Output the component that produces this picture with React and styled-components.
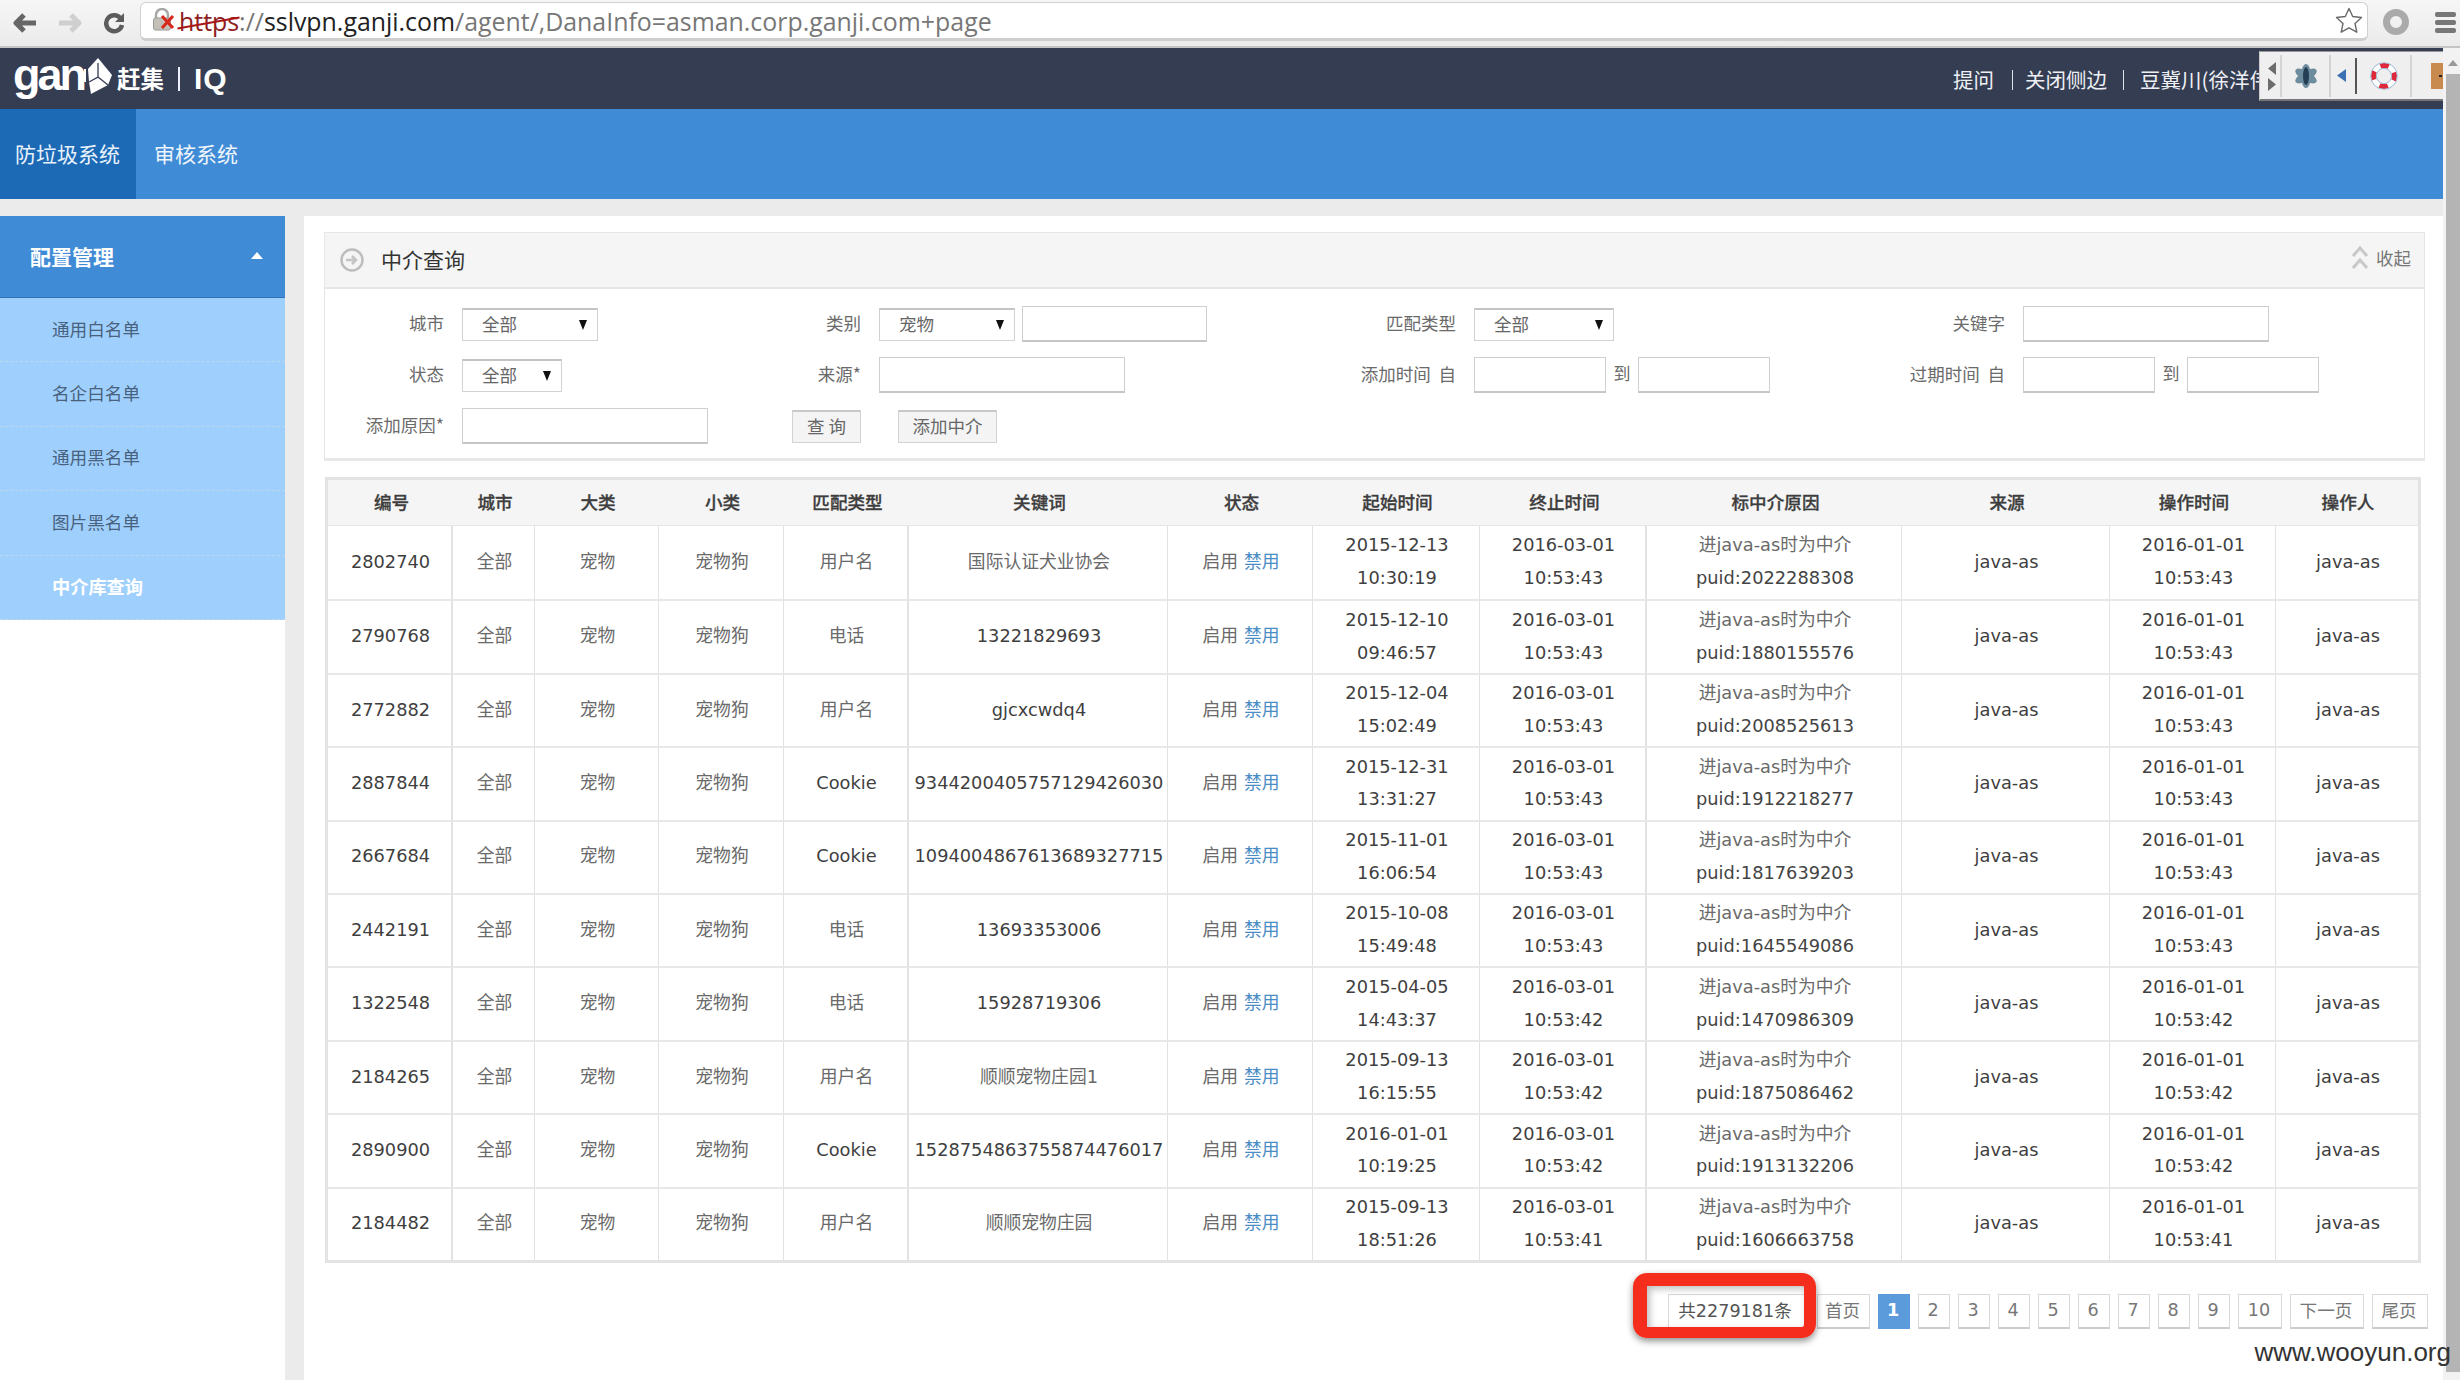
import React from 'react';
import styled, { createGlobalStyle } from 'styled-components';

const Global = createGlobalStyle`
  html, body { margin: 0; padding: 0; background: #fff; }
  * { box-sizing: border-box; }
  body { font-family: "DejaVu Sans", "Noto Sans CJK SC", sans-serif; }
`;

const CJK = `"Noto Sans CJK SC", "Noto Sans", sans-serif`;

const Page = styled.div`
  position: relative;
  width: 2460px;
  height: 1380px;
  overflow: hidden;
  display: flex;
  flex-direction: column;
`;

/* Browser chrome */
const BrowserBar = styled.div`
  height: 48px;
  flex: none;
  display: flex;
  align-items: flex-start;
  background: linear-gradient(#f6f6f6, #ebebeb);
  border-bottom: 2px solid #c4c4c4;
`;
const NavIcons = styled.div`
  width: 140px;
  height: 46px;
  padding-left: 13px;
  display: flex;
  align-items: center;
  gap: 19px;
  flex: none;
`;
const AddressBar = styled.div`
  width: 2228px;
  height: 39px;
  margin-top: 2px;
  flex: none;
  display: flex;
  align-items: center;
  padding-left: 12px;
  gap: 4px;
  background: #fff;
  border: 1px solid #d0d0d0;
  border-bottom: 3px solid #cfcfcf;
  border-radius: 6px;
  font: 400 24.9px/34px "Open Sans", sans-serif;
  white-space: nowrap;
  color: #777;
`;
const Scheme = styled.span`
  position: relative;
  color: #8e2020;
  &::after {
    content: '';
    position: absolute;
    left: -2px;
    right: -1px;
    top: 18px;
    height: 2px;
    background: #a81818;
    transform: rotate(-10deg);
  }
`;
const Host = styled.span`
  color: #222;
`;
const StarSlot = styled.div`
  margin-left: auto;
  margin-right: 4px;
  display: flex;
`;
const ChromeRight = styled.div`
  flex: 1;
  display: flex;
  align-items: center;
  height: 44px;
  padding-left: 15px;
  gap: 26px;
`;
const Ring = styled.div`
  width: 26px;
  height: 26px;
  border-radius: 50%;
  border: 7px solid #aaa;
`;
const Burger = styled.div`
  width: 21px;
  display: flex;
  flex-direction: column;
  gap: 3px;
  & > i {
    display: block;
    height: 5px;
    border-radius: 2px;
    background: #777;
  }
`;

/* Page area */
const Viewport = styled.div`
  flex: 1;
  display: flex;
  min-height: 0;
`;
const Site = styled.div`
  width: 2443px;
  flex: none;
  display: flex;
  flex-direction: column;
`;
const TopBar = styled.header`
  height: 61px;
  flex: none;
  background: #343d52;
  display: flex;
  align-items: center;
  justify-content: space-between;
  overflow: hidden;
`;
const Logo = styled.div`
  display: flex;
  align-items: center;
  padding-left: 13px;
  color: #fff;
  height: 100%;
`;
const LogoWord = styled.span`
  font: 700 45px/1 "Liberation Sans", sans-serif;
  letter-spacing: -3px;
  margin-top: -8px;
`;
const LogoCn = styled.span`
  font: 700 23.5px/1 ${CJK};
  margin-left: 1px;
`;
const LogoBar = styled.i`
  display: block;
  width: 2px;
  height: 24px;
  background: #eef;
  margin: 0 14px 0 14px;
`;
const LogoIq = styled.span`
  font: 700 30px/1 "Liberation Sans", sans-serif;
  letter-spacing: 1px;
`;
const TopLinks = styled.div`
  width: 490px;
  display: flex;
  align-items: center;
  color: #eef0f5;
  font: 400 20.5px/30px ${CJK};
  white-space: nowrap;
`;
const TopSep = styled.span`
  width: 1px;
  height: 20px;
  background: #dfe3ea;
  margin: 3px ${p => p.$after}px 0 ${p => p.$before}px;
`;

const NavBar = styled.nav`
  height: 90px;
  flex: none;
  background: #3f8bd6;
  display: flex;
  gap: 3px;
`;
const NavTab = styled.div`
  padding: 0 15px 2px;
  display: flex;
  align-items: center;
  color: ${p => (p.$active ? '#e8f2fc' : '#eef5fc')};
  background: ${p => (p.$active ? '#1c6ab6' : 'transparent')};
  font: 400 21px/30px ${CJK};
  &:first-child { padding-right: 16px; }
`;

const Body = styled.div`
  flex: 1;
  display: flex;
  gap: 19px;
  padding-top: 17px;
  background: #ebebeb;
  min-height: 0;
`;
const Sidebar = styled.aside`
  width: 285px;
  flex: none;
  background: #fff;
`;
const SideHead = styled.div`
  height: 82px;
  padding: 0 22px 2px 30px;
  display: flex;
  align-items: center;
  justify-content: space-between;
  background: #3f8bd6;
  border-bottom: 1px solid #2f73b5;
  color: #fff;
  font: 700 21px/30px ${CJK};
`;
const Caret = styled.i`
  width: 0;
  height: 0;
  border: 6px solid transparent;
  border-top: 0;
  border-bottom: 7px solid #fff;
`;
const SideItem = styled.div`
  height: 64.4px;
  padding: 0 0 2px 52px;
  display: flex;
  align-items: center;
  background: #9fd0fd;
  border-bottom: 1px dashed #bcd6ea;
  color: ${p => (p.$active ? '#fff' : '#48617d')};
  font: ${p => (p.$active ? 700 : 400)} ${p => (p.$active ? 18.2 : 17.6)}px/24px ${CJK};
`;

const Main = styled.main`
  flex: 1;
  background: #fff;
  padding: 16px 15px 0 20px;
  min-width: 0;
`;
const Panel = styled.section`
  width: 2101px;
  height: 229px;
  border: 1px solid #e6e6e6;
  border-bottom: 3px solid #e8e8e8;
`;
const PanelHead = styled.div`
  height: 56px;
  padding: 0 13px 0 15px;
  display: flex;
  align-items: center;
  background: #f5f5f5;
  border-bottom: 2px solid #e6e6e6;
`;
const PanelTitle = styled.h2`
  margin: -2px 0 0 17px;
  font: 400 21px/30px ${CJK};
  color: #333;
`;
const Collapse = styled.div`
  margin-left: auto;
  margin-top: -4px;
  display: flex;
  align-items: center;
  gap: 8px;
  color: #777;
  font: 400 17.5px/24px ${CJK};
`;
const Form = styled.div`
  display: grid;
  grid-template-columns: 137px 279px 138px 457px 138px 411px 138px 1fr;
  grid-auto-rows: 36px;
  row-gap: 15px;
  padding-top: 17px;
`;
const Label = styled.label`
  align-self: center;
  padding: 0 18px 2px 0;
  text-align: right;
  white-space: pre;
  color: #6a6a6a;
  font: 400 17.5px/24px ${CJK};
`;
const Control = styled.div`
  display: flex;
  align-items: center;
`;
const Select = styled.div`
  position: relative;
  width: ${p => p.$w}px;
  height: 33px;
  padding-left: 19px;
  background: #fff;
  border: 1px solid #d2d2d2;
  border-top: 2px solid #c4c4c4;
  color: #666;
  font: 400 17.5px/27px ${CJK};
  &::after {
    content: '';
    position: absolute;
    right: 10px;
    top: 10px;
    border: 4.5px solid transparent;
    border-bottom: 0;
    border-top: 10px solid #111;
  }
`;
const Input = styled.input`
  display: block;
  width: ${p => p.$w}px;
  height: 36px;
  margin: 0 ${p => p.$mr || 0}px 0 ${p => p.$ml || 0}px;
  padding: 0;
  background: #fff;
  border: 1px solid #cfcfcf;
  border-bottom: 2.5px solid #c6c6c6;
  border-radius: 0;
  outline: none;
`;
const To = styled.span`
  width: 32px;
  margin-top: -5px;
  text-align: center;
  color: #6a6a6a;
  font: 400 17px/24px ${CJK};
`;
const Actions = styled.div`
  grid-column: 3 / 5;
  display: flex;
  align-items: center;
  gap: 37px;
  padding-left: 51px;
`;
const Btn = styled.button`
  width: ${p => p.$w}px;
  height: 33px;
  padding: 0 0 2px;
  background: #f4f4f4;
  border: 1px solid #d2d2d2;
  border-top: 2px solid #c8c8c8;
  color: #666;
  font: 400 17.5px/26px ${CJK};
`;

const Grid = styled.table`
  display: table;
  width: 2096px;
  margin: 16px 0 0 1px;
  table-layout: fixed;
  border-collapse: separate;
  border-spacing: 0;
  border: 3px solid #e3e3e3;
`;
const Th = styled.th`
  height: 46px;
  padding: 0 0 2px 2px;
  background: #f5f5f5;
  border-bottom: 1px solid #e6e6e6;
  color: #3d3d3d;
  font: 500 17.6px/24px ${CJK};
  -webkit-text-stroke: 0.3px #3d3d3d;
`;
const Td = styled.td`
  height: 73.4px;
  padding: 0 0 1px 2px;
  text-align: center;
  border-right: 1px solid #e2e2e2;
  border-top: 2px solid #e8e8e8;
  color: ${p => (p.$dark ? '#3f3f3f' : '#6a6a6a')};
  font-size: 17.8px;
  line-height: 32.7px;
  tr:first-child > & { border-top: 0; }
  &:last-child { border-right: 0; }
  &:nth-child(4n + 1) { border-right-width: 2px; }
`;
const Line = styled.div`
  color: ${p => (p.$dark ? '#444' : 'inherit')};
`;
const Off = styled.a`
  color: #4a8cc4;
  margin-left: 6px;
`;

const Pager = styled.div`
  margin-top: 31px;
  display: flex;
  justify-content: flex-end;
  gap: 8px;
`;
const PageItem = styled.div`
  width: ${p => p.$w || 32}px;
  height: 35px;
  padding: 0 2px 2px 0;
  display: flex;
  align-items: center;
  justify-content: center;
  background: ${p => (p.$active ? '#5b9bdb' : '#fff')};
  border: 1px solid ${p => (p.$active ? '#5b9bdb' : '#d8d8d8')};
  border-bottom: 2px solid ${p => (p.$active ? '#5b9bdb' : '#cccccc')};
  color: ${p => (p.$active ? '#fff' : '#777')};
  font-size: 17.6px;
  font-weight: ${p => (p.$active ? 700 : 400)};
`;
const Count = styled(PageItem)`
  position: relative;
  padding-right: 7px;
  color: #555;
`;
const RedFrame = styled.span`
  position: absolute;
  left: -36px;
  right: -8px;
  top: -22px;
  bottom: -11px;
  border: solid #f52d1c;
  border-width: 13px 12px 11px 14px;
  border-radius: 14px;
  box-shadow: 0 3px 7px rgba(0, 0, 0, 0.45), inset 3px 3px 7px rgba(0, 0, 0, 0.25);
  pointer-events: none;
`;
const Watermark = styled.div`
  position: absolute;
  right: 9px;
  bottom: 13px;
  font: 400 26px/30px "Liberation Sans", sans-serif;
  color: #333;
`;

/* Floating toolbar + scrollbar */
const FloatBar = styled.div`
  position: absolute;
  left: 2259px;
  top: 51px;
  width: 184px;
  height: 50px;
  display: flex;
  align-items: center;
  background: #efefef;
  border-top: 1px solid #999;
  border-left: 1px solid #ccc;
  border-bottom: 2px solid #777;
  & > svg { flex: none; }
`;
const Scroll = styled.div`
  width: 17px;
  flex: none;
  position: relative;
  background: #f2f2f2;
`;
const ScrollUp = styled.i`
  position: absolute;
  left: 5px;
  top: 12px;
  border: 5.5px solid transparent;
  border-top: 0;
  border-bottom: 6px solid #9a9a9a;
`;
const ScrollThumb = styled.i`
  position: absolute;
  left: 3px;
  right: 0;
  top: 26px;
  bottom: 8px;
  background: #b4b4b4;
`;
const Divider = styled.i`
  display: block;
  flex: none;
  width: ${p => p.$w || 2}px;
  height: ${p => p.$h || 42}px;
  background: ${p => p.$c || '#d4d4d4'};
  margin: 0 ${p => p.$mr}px 0 ${p => p.$ml}px;
`;

const Back = ({ color }) => (
  <svg width="25" height="22" viewBox="0 0 25 22" fill="none">
    <path d="M11 3 3 11l8 8M3 11h20" stroke={color} strokeWidth="5" strokeLinejoin="round" />
  </svg>
);
const Forward = ({ color }) => (
  <svg width="25" height="22" viewBox="0 0 25 22" fill="none">
    <path d="m14 3 8 8-8 8M22 11H2" stroke={color} strokeWidth="5" strokeLinejoin="round" />
  </svg>
);
const Reload = () => (
  <svg width="22" height="22" viewBox="0 0 22 22" fill="none" style={{ marginLeft: 2 }}>
    <path d="M18 7a8 8 0 1 0 1 6" stroke="#5c5c5c" strokeWidth="4.5" />
    <path d="M21 1v9h-9z" fill="#5c5c5c" />
  </svg>
);
const LockX = () => (
  <svg width="22" height="26" viewBox="0 0 22 26" fill="none">
    <path d="M3 10V7a6 6 0 0 1 12 0v3" stroke="#a8a8a8" strokeWidth="2.5" />
    <rect x="0.5" y="10" width="17" height="12" rx="2" fill="#c4c0b8" stroke="#999" />
    <path d="m9 8 11 12M20 8 9 20" stroke="#d8261c" strokeWidth="3" />
  </svg>
);
const Star = () => (
  <svg width="28" height="27" viewBox="0 0 28 27" fill="#fff" stroke="#6a6a6a" strokeWidth="1.4">
    <path d="m14 1.5 3.7 8 8.8 1-6.5 6 1.8 8.7-7.8-4.4-7.8 4.4 1.8-8.7-6.5-6 8.8-1z" strokeLinejoin="round" />
  </svg>
);
const Arrows = () => (
  <svg width="20" height="48" viewBox="0 0 20 48">
    <path d="M16 10v13L8 16.500zM8 26v13l8-6.500z" fill="#6d6d6d" />
  </svg>
);
const Flower = () => (
  <svg width="22" height="26" viewBox="0 0 22 26">
    {[0, 60, 120].map(a => (
      <ellipse key={a} cx="11" cy="13" rx="5" ry="12" fill="#6d8c9e" transform={`rotate(${a} 11 13)`} />
    ))}
    <ellipse cx="11" cy="13" rx="3" ry="9" fill="#243f55" />
  </svg>
);
const BlueTri = () => (
  <svg width="9" height="13" viewBox="0 0 9 13">
    <path d="M9 0v13L0 6.500z" fill="#3a72b4" />
  </svg>
);
const Lifebuoy = () => (
  <svg width="28" height="28" viewBox="0 0 28 28" fill="none">
    <circle cx="14" cy="14" r="10.500" stroke="#fff" strokeWidth="5" />
    <circle cx="14" cy="14" r="10.500" stroke="#e0283c" strokeWidth="5" strokeDasharray="8.500 8" strokeDashoffset="4" />
    <circle cx="14" cy="14" r="13.300" stroke="#9db8d4" strokeWidth="1" />
    <circle cx="14" cy="14" r="7.600" stroke="#9db8d4" strokeWidth="1" />
  </svg>
);
const Door = () => (
  <svg width="12" height="26" viewBox="0 0 12 26">
    <rect width="12" height="26" fill="#c98a50" />
    <rect x="8" y="12" width="3" height="2" fill="#222" />
  </svg>
);
const CircleArrow = () => (
  <svg width="24" height="24" viewBox="0 0 24 24" fill="none">
    <circle cx="12" cy="12" r="10.500" stroke="#bdbdbd" strokeWidth="2.500" />
    <path d="M6 12h9M12 8l4 4-4 4" stroke="#c4c4c4" strokeWidth="2.500" />
  </svg>
);
const DoubleUp = () => (
  <svg width="16" height="28" viewBox="0 0 16 28" fill="none" stroke="#c8c8c8" strokeWidth="3">
    <path d="m1 12 7-8 7 8M1 24l7-8 7 8" />
  </svg>
);
const LogoFlag = () => (
  <svg width="32" height="38" viewBox="0 0 32 38" style={{ flex: 'none', margin: '-6px 0 0 0' }}>
    <path d="M0 12h2v13H0z" fill="#fff" />
    <path d="m4 12 10-11 14 17-4 10-17 9-2-12z" fill="#fff" />
    <path d="M14 6v14l-9 5M14 20l10 8" stroke="#343d52" strokeWidth="1.300" fill="none" />
  </svg>
);

const columns = [
  ['编号', 125], ['城市', 82], ['大类', 124], ['小类', 125], ['匹配类型', 125],
  ['关键词', 259], ['状态', 145], ['起始时间', 167], ['终止时间', 167], ['标中介原因', 255],
  ['来源', 208], ['操作时间', 166], ['操作人', 142],
];

const rows = [
  ['2802740', '用户名', '国际认证犬业协会', '2015-12-13', '10:30:19', '10:53:43', '2022288308'],
  ['2790768', '电话', '13221829693', '2015-12-10', '09:46:57', '10:53:43', '1880155576'],
  ['2772882', '用户名', 'gjcxcwdq4', '2015-12-04', '15:02:49', '10:53:43', '2008525613'],
  ['2887844', 'Cookie', '9344200405757129426030', '2015-12-31', '13:31:27', '10:53:43', '1912218277'],
  ['2667684', 'Cookie', '1094004867613689327715', '2015-11-01', '16:06:54', '10:53:43', '1817639203'],
  ['2442191', '电话', '13693353006', '2015-10-08', '15:49:48', '10:53:43', '1645549086'],
  ['1322548', '电话', '15928719306', '2015-04-05', '14:43:37', '10:53:42', '1470986309'],
  ['2184265', '用户名', '顺顺宠物庄园1', '2015-09-13', '16:15:55', '10:53:42', '1875086462'],
  ['2890900', 'Cookie', '1528754863755874476017', '2016-01-01', '10:19:25', '10:53:42', '1913132206'],
  ['2184482', '用户名', '顺顺宠物庄园', '2015-09-13', '18:51:26', '10:53:41', '1606663758'],
];

const isLatin = s => /^[\x00-\x7f]+$/.test(s);

export default function App() {
  return (
    <Page>
      <Global />
      <BrowserBar>
        <NavIcons>
          <Back color="#666" />
          <Forward color="#cfcfcf" />
          <Reload />
        </NavIcons>
        <AddressBar>
          <LockX />
          <span>
            <Scheme>https</Scheme>://<Host>sslvpn.ganji.com</Host>/agent/,DanaInfo=asman.corp.ganji.com+page
          </span>
          <StarSlot><Star /></StarSlot>
        </AddressBar>
        <ChromeRight>
          <Ring />
          <Burger><i /><i /><i /></Burger>
        </ChromeRight>
      </BrowserBar>
      <Viewport>
        <Site>
          <TopBar>
            <Logo>
              <LogoWord>gan</LogoWord>
              <LogoFlag />
              <LogoCn>赶集</LogoCn>
              <LogoBar />
              <LogoIq>IQ</LogoIq>
            </Logo>
            <TopLinks>
              提问<TopSep $before={18} $after={12} />关闭侧边<TopSep $before={16} $after={16} />豆冀川(徐洋伟)
            </TopLinks>
          </TopBar>
          <NavBar>
            <NavTab $active>防垃圾系统</NavTab>
            <NavTab>审核系统</NavTab>
          </NavBar>
          <Body>
            <Sidebar>
              <SideHead>配置管理<Caret /></SideHead>
              <SideItem>通用白名单</SideItem>
              <SideItem>名企白名单</SideItem>
              <SideItem>通用黑名单</SideItem>
              <SideItem>图片黑名单</SideItem>
              <SideItem $active>中介库查询</SideItem>
            </Sidebar>
            <Main>
              <Panel>
                <PanelHead>
                  <CircleArrow />
                  <PanelTitle>中介查询</PanelTitle>
                  <Collapse><DoubleUp />收起</Collapse>
                </PanelHead>
                <Form>
                  <Label>城市</Label>
                  <Control><Select $w={136}>全部</Select></Control>
                  <Label>类别</Label>
                  <Control><Select $w={136}>宠物</Select><Input $w={185} $ml={7} /></Control>
                  <Label>匹配类型</Label>
                  <Control><Select $w={140}>全部</Select></Control>
                  <Label>关键字</Label>
                  <Control><Input $w={246} /></Control>

                  <Label>状态</Label>
                  <Control><Select $w={100}>全部</Select></Control>
                  <Label>来源*</Label>
                  <Control><Input $w={246} /></Control>
                  <Label>添加时间  自</Label>
                  <Control><Input $w={132} /><To>到</To><Input $w={132} /></Control>
                  <Label>过期时间  自</Label>
                  <Control><Input $w={132} /><To>到</To><Input $w={132} /></Control>

                  <Label>添加原因*</Label>
                  <Control><Input $w={246} /></Control>
                  <Actions>
                    <Btn $w={69}>查 询</Btn>
                    <Btn $w={99}>添加中介</Btn>
                  </Actions>
                </Form>
              </Panel>
              <Grid>
                <colgroup>
                  {columns.map(([name, w]) => <col key={name} width={w} />)}
                </colgroup>
                <thead>
                  <tr>{columns.map(([name]) => <Th key={name}>{name}</Th>)}</tr>
                </thead>
                <tbody>
                  {rows.map(r => (
                    <tr key={r[0]}>
                      <Td $dark>{r[0]}</Td>
                      <Td>全部</Td>
                      <Td>宠物</Td>
                      <Td>宠物狗</Td>
                      <Td $dark={isLatin(r[1])}>{r[1]}</Td>
                      <Td $dark={isLatin(r[2])}>{r[2]}</Td>
                      <Td>启用<Off>禁用</Off></Td>
                      <Td $dark><Line>{r[3]}</Line><Line>{r[4]}</Line></Td>
                      <Td $dark><Line>2016-03-01</Line><Line>{r[5]}</Line></Td>
                      <Td><Line>进java-as时为中介</Line><Line $dark>puid:{r[6]}</Line></Td>
                      <Td $dark>java-as</Td>
                      <Td $dark><Line>2016-01-01</Line><Line>{r[5]}</Line></Td>
                      <Td $dark>java-as</Td>
                    </tr>
                  ))}
                </tbody>
              </Grid>
              <Pager>
                <Count $w={141}>共2279181条<RedFrame /></Count>
                <PageItem $w={53}>首页</PageItem>
                <PageItem $active>1</PageItem>
                {[2, 3, 4, 5, 6, 7, 8, 9].map(n => <PageItem key={n}>{n}</PageItem>)}
                <PageItem $w={44}>10</PageItem>
                <PageItem $w={74}>下一页</PageItem>
                <PageItem $w={56}>尾页</PageItem>
              </Pager>
            </Main>
          </Body>
        </Site>
        <Scroll>
          <ScrollUp />
          <ScrollThumb />
        </Scroll>
      </Viewport>
      <FloatBar>
        <Arrows />
        <Divider $ml={0} $mr={13} />
        <Flower />
        <Divider $ml={12} $mr={6} />
        <BlueTri />
        <Divider $w={2} $h={36} $c="#555" $ml={9} $mr={13} />
        <Lifebuoy />
        <Divider $ml={12} $mr={19} />
        <Door />
      </FloatBar>
      <Watermark>www.wooyun.org</Watermark>
    </Page>
  );
}
